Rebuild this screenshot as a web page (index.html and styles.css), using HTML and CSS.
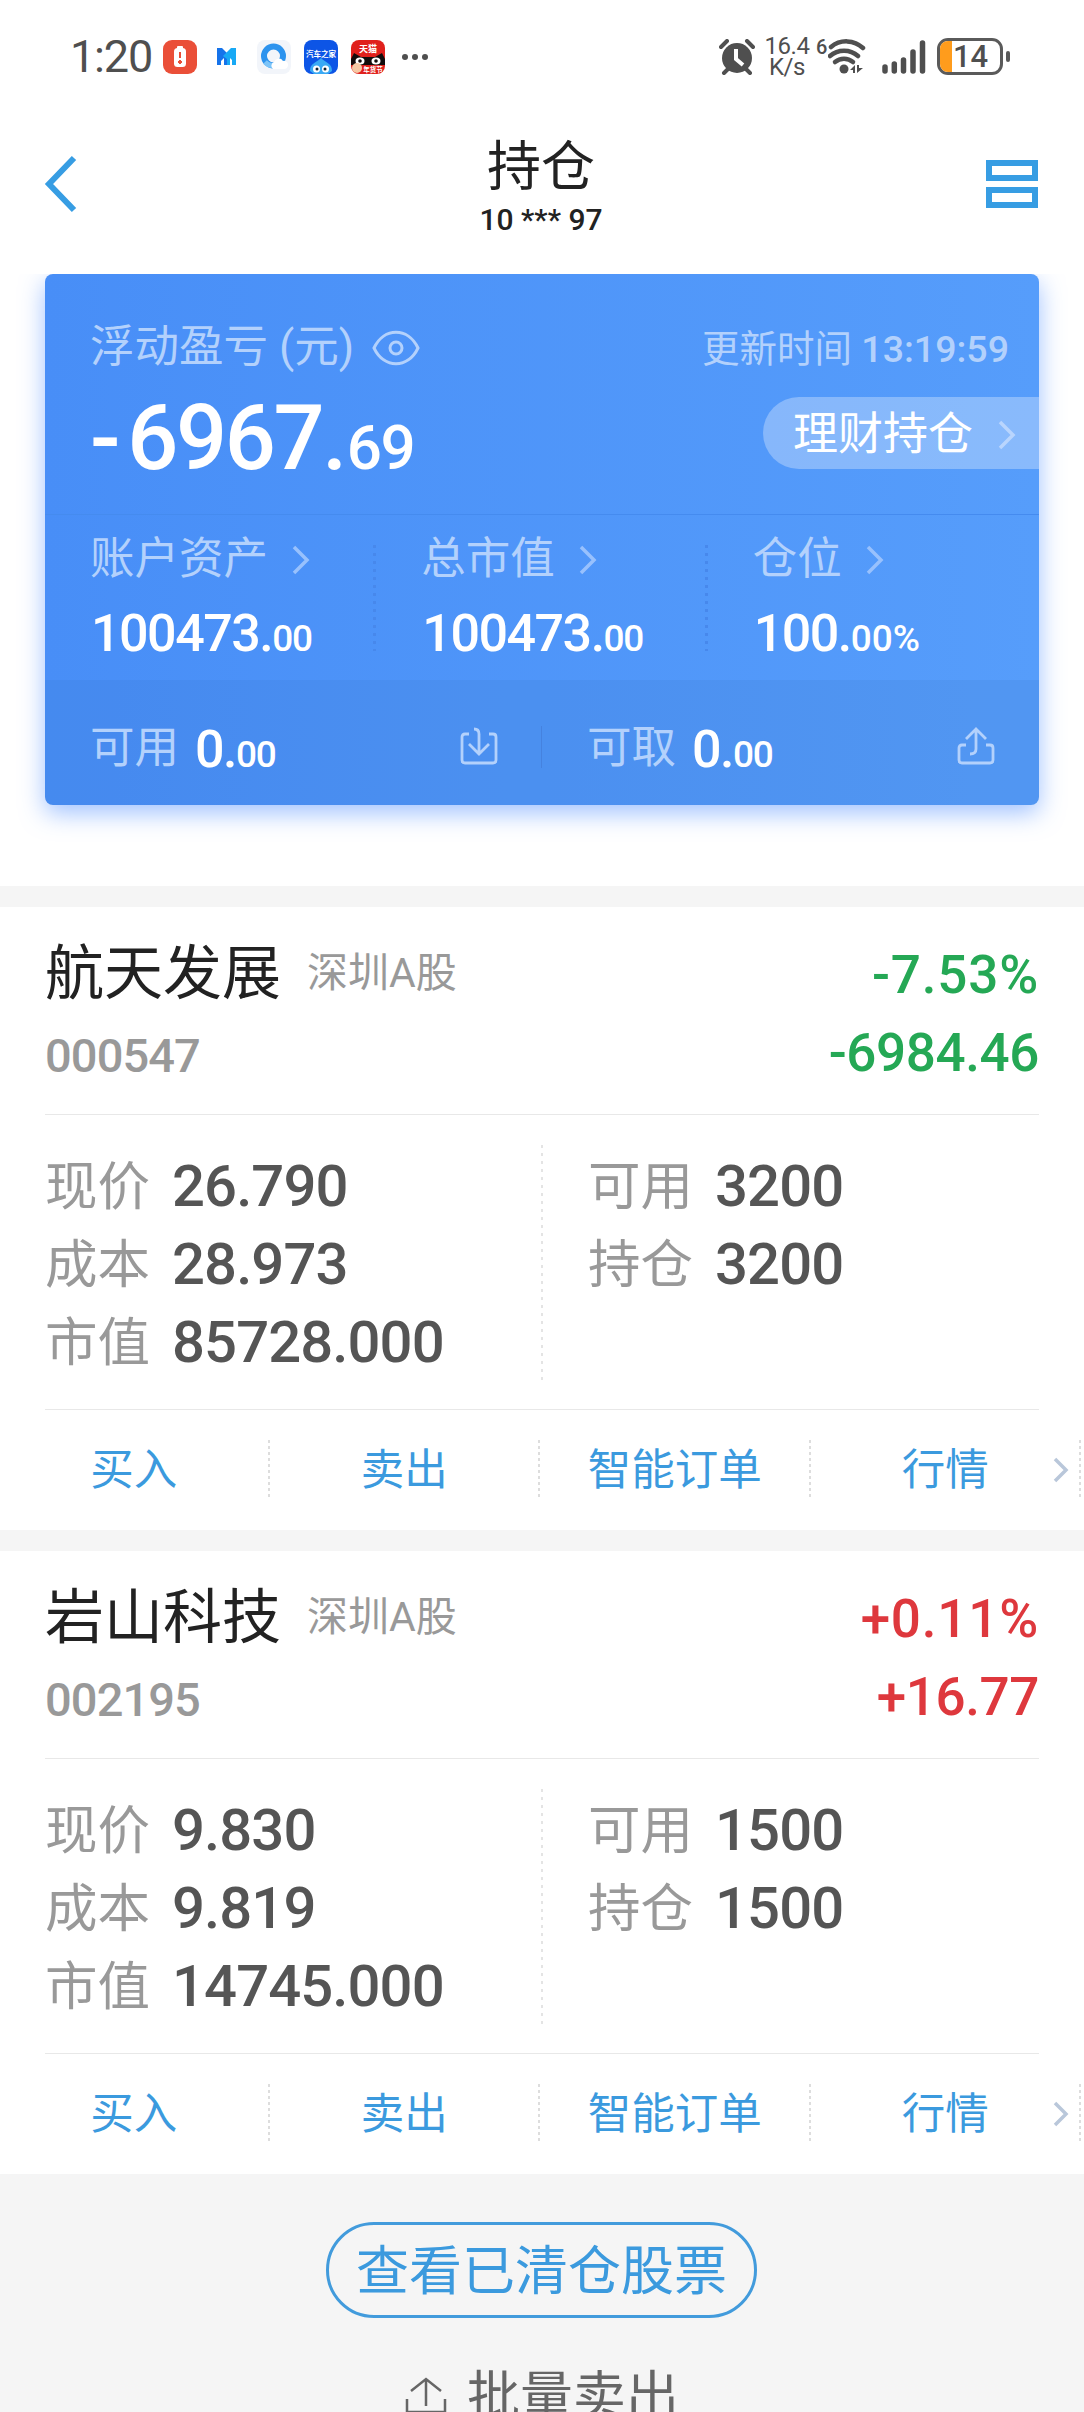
FILE: index.html
```
<!DOCTYPE html>
<html lang="zh-CN">
  <head>
    <meta charset="UTF-8" />
    <meta name="viewport" content="width=device-width, initial-scale=1.0" />
    <title>持仓</title>
    <link rel="stylesheet" href="styles.css">
  </head>
  <body>
    <!-- Status bar -->
    <div class="status-bar">
      <span class="clock">1:20</span>
      <div class="status-apps">
        <svg width="34" height="34" viewBox="0 0 34 34">
          <rect width="34" height="34" rx="9" fill="#ea4f38" />
          <rect x="14" y="6" width="6" height="4" rx="1" fill="#fff" />
          <rect x="11" y="8" width="12" height="19" rx="3.5" fill="#fff" />
          <path d="M17 12v6M17 20v4M15 22h4" stroke="#ea4f38" stroke-width="2" />
        </svg>
        <svg width="34" height="34" viewBox="0 0 34 34">
          <path d="M7 8h5l5 5v12h-3v-7l-3 3v4H7z" fill="#1673ea" />
          <path d="M26 8h-5l-8 8 4 3v6h3v-7l2 2v5h4z" fill="#18a9f5" />
        </svg>
        <svg width="34" height="34" viewBox="0 0 34 34">
          <rect width="34" height="34" rx="8" fill="#f2f5fa" />
          <circle cx="16.500" cy="16" r="9.500" fill="none" stroke="#2c93ee" stroke-width="6" />
          <path d="M8 22a10 10 0 0 0 10 3" fill="none" stroke="#7cc4f8" stroke-width="5" />
          <path d="M16 29a4 4 0 0 1 1-7 5 5 0 0 1 9-1 4 4 0 0 1 2 8z" fill="#fff" />
        </svg>
        <svg width="34" height="34" viewBox="0 0 34 34">
          <rect width="34" height="34" rx="8" fill="#0d55e6" />
          <path d="M6 31c0-8 6-8 11-13 5 5 11 5 11 13l-4 3H10z" fill="#39a9f4" />
          <circle cx="12.500" cy="29" r="3.500" fill="#fff" />
          <circle cx="21.500" cy="29" r="3.500" fill="#fff" />
          <circle cx="13" cy="29" r="1.500" fill="#123" />
          <circle cx="21" cy="29" r="1.500" fill="#123" />
          <text x="17" y="17" class="tiny-text">汽车之家</text>
        </svg>
        <svg width="34" height="34" viewBox="0 0 34 34">
          <rect width="34" height="34" rx="8" fill="#e0201c" />
          <path d="M3 13l7 4h14l7-4 3 6v6H0v-6z" fill="#120c0c" />
          <ellipse cx="9" cy="21" rx="4.500" ry="3.500" fill="#fff" />
          <ellipse cx="25" cy="21" rx="4.500" ry="3.500" fill="#fff" />
          <circle cx="9" cy="21" r="1.800" fill="#120c0c" />
          <circle cx="25" cy="21" r="1.800" fill="#120c0c" />
          <circle cx="6" cy="28" r="5" fill="#f6c9a5" />
          <text x="17" y="12" class="tiny-text cat-text">天猫</text>
          <text x="22" y="32" class="tiny-text fest-text">年货节</text>
        </svg>
      </div>
      <svg class="more-dots" width="28" height="8" viewBox="0 0 28 8" fill="#4f4f4f">
        <circle cx="4" cy="4" r="3" />
        <circle cx="14" cy="4" r="3" />
        <circle cx="24" cy="4" r="3" />
      </svg>

      <svg class="alarm" width="36" height="36" viewBox="0 0 36 36">
        <circle cx="18" cy="19" r="15" fill="#4f4f4f" />
        <path d="M2 8l6-6M34 8l-6-6M9 30l-4 4M27 30l4 4" stroke="#4f4f4f" stroke-width="4" stroke-linecap="round" />
        <path d="M17 10v10l7 6" fill="none" stroke="#fff" stroke-width="4" />
      </svg>
      <div class="net-speed">
        <span>16.4</span>
        <span>K/s</span>
      </div>
      <span class="wifi-gen">6</span>
      <svg width="38" height="37" viewBox="11 0 38 37">
        <g fill="none" stroke="#4f4f4f" stroke-width="4.500" stroke-linecap="round">
          <path d="M14 9a24 24 0 0 1 32 1" />
          <path d="M13 18a21 21 0 0 1 28 0" />
          <path d="M18 24a14 14 0 0 1 18 0" />
        </g>
        <circle cx="27" cy="31" r="4.500" fill="#4f4f4f" />
        <path d="M33 32l5-5v8h-2v-3zM40 27v8l6-5h-4v-3z" fill="#4f4f4f" />
      </svg>
      <svg class="signal" width="44" height="34" viewBox="0 0 44 34" stroke="#4f4f4f" stroke-width="5.500" stroke-linecap="round">
        <path d="M3 27v4M12.300 24v7M21.500 20v11M31 12v19M40.500 3v28" />
      </svg>
      <div class="battery">
        <div class="battery-fill"></div>
        <span>14</span>
      </div>
      <div class="battery-tip"></div>
    </div>

    <!-- Header -->
    <div class="header">
      <svg width="34" height="58" viewBox="0 0 34 58">
        <path d="M30 3L5 29l25 26" fill="none" stroke="#379de3" stroke-width="6" />
      </svg>
      <div class="header-title">
        <h1>持仓</h1>
        <p>10 *** 97</p>
      </div>
      <svg width="52" height="50" viewBox="0 0 52 50" fill="none" stroke="#379de3" stroke-width="6">
        <rect x="3" y="4" width="46" height="15" />
        <rect x="3" y="31" width="46" height="15" />
      </svg>
    </div>

    <!-- Account summary -->
    <div class="summary">
      <div class="summary-top">
        <div class="profit">
          <div class="profit-label">
            <span>浮动盈亏 (元)</span>
            <svg width="48" height="36" viewBox="0 0 48 36" fill="none" stroke="#b3d1fc" stroke-width="3">
              <path d="M2 18C12-3 36-3 46 18 36 39 12 39 2 18z" />
              <circle cx="24" cy="18" r="6" />
            </svg>
          </div>
          <div class="profit-value"><span class="sign">-</span>6967.<small>69</small></div>
        </div>
        <div class="summary-side">
          <div class="update-time">更新时间 <span>13:19:59</span></div>
          <div class="wealth-button">
            理财持仓
            <svg width="18" height="30" viewBox="0 0 18 30"><path d="M2 2l13 13L2 28" /></svg>
          </div>
        </div>
      </div>

      <div class="assets">
        <div class="asset">
          <div class="asset-label">账户资产 <svg width="18" height="30" viewBox="0 0 18 30"><path d="M2 2l13 13L2 28" /></svg></div>
          <div class="asset-value">100473.<small>00</small></div>
        </div>
        <div class="asset">
          <div class="asset-label">总市值 <svg width="18" height="30" viewBox="0 0 18 30"><path d="M2 2l13 13L2 28" /></svg></div>
          <div class="asset-value">100473.<small>00</small></div>
        </div>
        <div class="asset">
          <div class="asset-label">仓位 <svg width="18" height="30" viewBox="0 0 18 30"><path d="M2 2l13 13L2 28" /></svg></div>
          <div class="asset-value">100.<small>00%</small></div>
        </div>
      </div>

      <div class="cash">
        <div class="cash-item">
          <span class="cash-label">可用</span>
          <span class="asset-value">0.<small>00</small></span>
          <svg width="38" height="38" viewBox="0 0 38 38">
            <path d="M9 7H5q-3 0-3 3v23q0 3 3 3h28q3 0 3-3V10q0-3-3-3h-4M14 2q5 0 5 5v20M9 17l10 10 10-10" />
          </svg>
        </div>
        <div class="cash-item">
          <span class="cash-label">可取</span>
          <span class="asset-value">0.<small>00</small></span>
          <svg width="38" height="38" viewBox="0 0 38 38">
            <path d="M9 18H5q-3 0-3 3v12q0 3 3 3h28q3 0 3-3V21q0-3-3-3h-4M13 27q6 0 6-5V2M9 12L19 2l10 10" />
          </svg>
        </div>
      </div>
    </div>

    <!-- Positions -->
    <div class="stock">
      <div class="stock-head">
        <div>
          <div class="stock-name">航天发展 <span>深圳A股</span></div>
          <div class="stock-code">000547</div>
        </div>
        <div class="stock-change down">
          <div class="percent">-7.53%</div>
          <div>-6984.46</div>
        </div>
      </div>
      <div class="stock-data">
        <div class="data-column">
          <div class="data-row"><label>现价</label><span>26.790</span></div>
          <div class="data-row"><label>成本</label><span>28.973</span></div>
          <div class="data-row"><label>市值</label><span>85728.000</span></div>
        </div>
        <div class="data-column">
          <div class="data-row"><label>可用</label><span>3200</span></div>
          <div class="data-row"><label>持仓</label><span>3200</span></div>
        </div>
      </div>
      <div class="actions">
        <a>买入</a>
        <a>卖出</a>
        <a>智能订单</a>
        <a>行情</a>
        <svg width="18" height="28" viewBox="0 0 18 28"><path d="M3 3l11 11L3 25" /></svg>
      </div>
    </div>

    <div class="stock">
      <div class="stock-head">
        <div>
          <div class="stock-name">岩山科技 <span>深圳A股</span></div>
          <div class="stock-code">002195</div>
        </div>
        <div class="stock-change up">
          <div class="percent">+0.11%</div>
          <div>+16.77</div>
        </div>
      </div>
      <div class="stock-data">
        <div class="data-column">
          <div class="data-row"><label>现价</label><span>9.830</span></div>
          <div class="data-row"><label>成本</label><span>9.819</span></div>
          <div class="data-row"><label>市值</label><span>14745.000</span></div>
        </div>
        <div class="data-column">
          <div class="data-row"><label>可用</label><span>1500</span></div>
          <div class="data-row"><label>持仓</label><span>1500</span></div>
        </div>
      </div>
      <div class="actions">
        <a>买入</a>
        <a>卖出</a>
        <a>智能订单</a>
        <a>行情</a>
        <svg width="18" height="28" viewBox="0 0 18 28"><path d="M3 3l11 11L3 25" /></svg>
      </div>
    </div>

    <!-- Footer -->
    <div class="footer">
      <button class="cleared-button">查看已清仓股票</button>
      <div class="batch-sell">
        <svg width="42" height="42" viewBox="0 0 42 42" fill="none" stroke="#666" stroke-width="2.500">
          <path d="M2 22v13h38V22M21 29V2M6 14L21 2l15 12" />
        </svg>
        <span>批量卖出</span>
      </div>
    </div>
  </body>
</html>
```
FILE: styles.css
```
* {
  box-sizing: border-box;
}
body {
  margin: 0;
  width: 1084px;
  height: 2412px;
  overflow: hidden;
  display: flex;
  flex-direction: column;
  background-color: #f5f5f5;
  color: #222;
  font-family: Roboto, "Noto Sans CJK SC", sans-serif;
  line-height: 1.2;
}
svg {
  display: block;
  flex: none;
}
/* Status bar */
.status-bar {
  flex: none;
  display: flex;
  align-items: center;
  height: 113px;
  padding: 0 74px 0 70px;
  background-color: #fff;
  color: #4f4f4f;
}
.clock {
  width: 93px;
  font-size: 45px;
  letter-spacing: -1.2px;
}
.status-apps {
  display: flex;
  gap: 13px;
}
.tiny-text {
  font-size: 7.5px;
  font-weight: bold;
  fill: #fff;
  text-anchor: middle;
}
.cat-text {
  font-size: 9px;
}
.fest-text {
  font-size: 6.5px;
}
.more-dots {
  margin-left: 16px;
}
.alarm {
  margin-left: auto;
}
.net-speed {
  width: 46px;
  margin-left: 9px;
  display: flex;
  flex-direction: column;
  text-align: center;
  font-size: 24px;
  line-height: 21px;
  letter-spacing: -0.5px;
}
.wifi-gen {
  width: 12px;
  margin: -20px 0 0 6px;
  font-size: 20px;
  font-weight: 500;
}
.signal {
  margin-left: 16px;
}
.battery {
  display: flex;
  width: 66px;
  height: 37px;
  margin-left: 11px;
  border: 3px solid #5a5a5a;
  border-radius: 11px;
  overflow: hidden;
  font-size: 31px;
  font-weight: 500;
  line-height: 32px;
}
.battery-fill {
  width: 12px;
  margin-right: 1px;
  background-color: #ff9c1c;
}
.battery-tip {
  width: 4px;
  height: 11px;
  margin-left: 3px;
  border-radius: 2px;
  background-color: #5a5a5a;
}
/* Header */
.header {
  flex: none;
  display: flex;
  justify-content: space-between;
  height: 161px;
  padding: 0 46px 0 44px;
  background-color: #fff;
}
.header > svg {
  margin-top: 42px;
}
.header > svg:last-child {
  margin-top: 46px;
}
.header-title {
  padding-left: 18px;
  text-align: center;
}
.header-title h1 {
  margin: 23px 0 0;
  font-size: 54px;
  font-weight: normal;
  line-height: 64px;
}
.header-title p {
  margin: 3px 0 0;
  font-size: 30px;
  font-weight: 500;
  line-height: 34px;
}
/* Account summary */
.summary {
  flex: none;
  position: relative;
  height: 531px;
  margin: 0 45px;
  border-radius: 8px;
  background: linear-gradient(to right, #488ef7, #569dfb);
  box-shadow: 0 8px 24px rgba(66, 133, 255, 0.5), 0 0 0 1000px #fff;
  clip-path: inset(0 -45px -81px -45px);
  color: #b3d1fc;
}
.summary-top {
  display: flex;
  justify-content: space-between;
  height: 241px;
  padding-left: 45px;
  border-bottom: 1px solid #458bef;
}
.profit-label {
  display: flex;
  align-items: center;
  height: 60px;
  margin-top: 44px;
  font-size: 44.5px;
  gap: 18px;
}
.profit-value {
  margin-top: 8px;
  color: #fff;
  font-size: 90px;
  font-weight: 500;
  line-height: 106px;
  letter-spacing: -2.4px;
}
.profit-value small {
  margin-left: 2px;
  font-size: 62px;
  letter-spacing: -1.5px;
}
.sign {
  padding-right: 9px;
}
.summary-side {
  display: flex;
  flex-direction: column;
  align-items: flex-end;
}
.update-time {
  margin-top: 45px;
  padding-right: 30px;
  font-size: 37.5px;
  line-height: 60px;
}
.update-time span {
  font-weight: 500;
}
.wealth-button {
  display: flex;
  align-items: center;
  justify-content: space-between;
  width: 276px;
  height: 72px;
  margin-top: 18px;
  padding: 3px 23px 0 30px;
  border-radius: 36px 0 0 36px;
  background-color: rgba(255, 255, 255, 0.3);
  color: #fff;
  font-size: 45px;
}
.wealth-button path,
.asset-label path {
  fill: none;
  stroke: #98c1fd;
  stroke-width: 3.5;
}
.wealth-button path {
  stroke: #b9d5fd;
}
.assets {
  display: flex;
  height: 165px;
}
.asset {
  width: 332px;
  padding: 17px 0 0 45px;
  background: repeating-linear-gradient(to bottom, #4788ec 0 3px, transparent 3px 8px) right 30px / 3px 106px no-repeat;
}
.asset:last-child {
  background: none;
}
.asset-label {
  display: flex;
  align-items: center;
  gap: 24px;
  height: 56px;
  font-size: 44.5px;
}
.asset-value {
  color: #fff;
  font-size: 52px;
  font-weight: 500;
  line-height: 60px;
  letter-spacing: -1.5px;
}
.asset > .asset-value {
  margin: 16px 0 0 1px;
}
.asset-value small {
  font-size: 37px;
  letter-spacing: -1.4px;
}
.asset:last-child small {
  letter-spacing: 0;
}
.cash {
  display: flex;
  height: 125px;
  border-radius: 0 0 8px 8px;
  background-color: rgba(60, 110, 190, 0.14);
}
.cash-item {
  display: flex;
  align-items: center;
  width: 497px;
  padding: 12px 44px 0 45px;
  font-size: 44.5px;
  background: linear-gradient(#4582df, #4582df) right 46px / 1px 42px no-repeat;
}
.cash-item:last-child {
  background: none;
}
.cash-label {
  width: 105px;
}
.cash-item .asset-value {
  padding-top: 7px;
}
.cash-item svg {
  margin: -5px 0 0 auto;
  fill: none;
  stroke: #b3d1fc;
  stroke-width: 2.8;
}
/* Positions */
.stock {
  flex: none;
  height: 623px;
  margin-bottom: 21px;
  background-color: #fff;
}
.summary + .stock {
  margin-top: 102px;
}
.stock-head {
  display: flex;
  justify-content: space-between;
  height: 208px;
  margin: 0 45px;
  padding-top: 27px;
  border-bottom: 1px solid #e8e8e8;
}
.stock-name {
  display: flex;
  align-items: center;
  height: 80px;
  font-size: 59px;
}
.stock-name span {
  margin-left: 26px;
  color: #999;
  font-size: 41px;
}
.stock-code {
  color: #999;
  font-size: 47px;
  font-weight: 500;
  line-height: 84px;
  letter-spacing: -0.9px;
}
.stock-change {
  padding-top: 2px;
  font-size: 53px;
  font-weight: 500;
  line-height: 78px;
  text-align: right;
  letter-spacing: -0.4px;
}
.stock-change .percent {
  letter-spacing: 0.8px;
}
.down {
  color: #25a855;
}
.up {
  color: #de383d;
}
.stock-data {
  display: flex;
  height: 295px;
  margin: 0 45px;
  padding-top: 33px;
  border-bottom: 1px solid #e8e8e8;
  background: repeating-linear-gradient(to bottom, #e4e4e4 0 3px, transparent 3px 8px) 496px 30px / 2px 235px no-repeat;
}
.data-column {
  flex: none;
  width: 543px;
}
.data-column:last-child {
  width: 451px;
}
.data-row {
  display: flex;
  align-items: center;
  height: 78px;
  color: #555;
  font-size: 58px;
  font-weight: 500;
  letter-spacing: -0.9px;
}
.data-row label {
  width: 127px;
  color: #999;
  font-size: 52.5px;
  font-weight: normal;
  letter-spacing: 0;
}
.actions {
  position: relative;
  display: flex;
  height: 120px;
  padding-top: 30px;
}
.actions a {
  flex: none;
  width: 270.5px;
  height: 58px;
  padding-right: 3px;
  color: #3b9ade;
  font-size: 43.5px;
  line-height: 61px;
  text-align: center;
  background: repeating-linear-gradient(to bottom, #ddd 0 3px, transparent 3px 6px) right 1px top 0 / 2px 57px no-repeat;
}
.actions svg {
  position: absolute;
  top: 46px;
  right: 14px;
  fill: none;
  stroke: #b9c7da;
  stroke-width: 3.5;
}
/* Footer */
.footer {
  display: flex;
  flex-direction: column;
  align-items: center;
  padding-top: 27px;
}
.cleared-button {
  flex: none;
  width: 431px;
  height: 96px;
  padding: 4px 0 0;
  margin-right: 1px;
  border: 3px solid #429bdc;
  border-radius: 48px;
  background: none;
  color: #3b9ade;
  font-family: inherit;
  font-size: 53px;
  line-height: 64px;
}
.batch-sell {
  display: flex;
  gap: 20px;
  margin-top: 44px;
  color: #666;
  font-size: 53px;
  line-height: 70px;
}
.batch-sell svg {
  margin-top: 15px;
}
```
